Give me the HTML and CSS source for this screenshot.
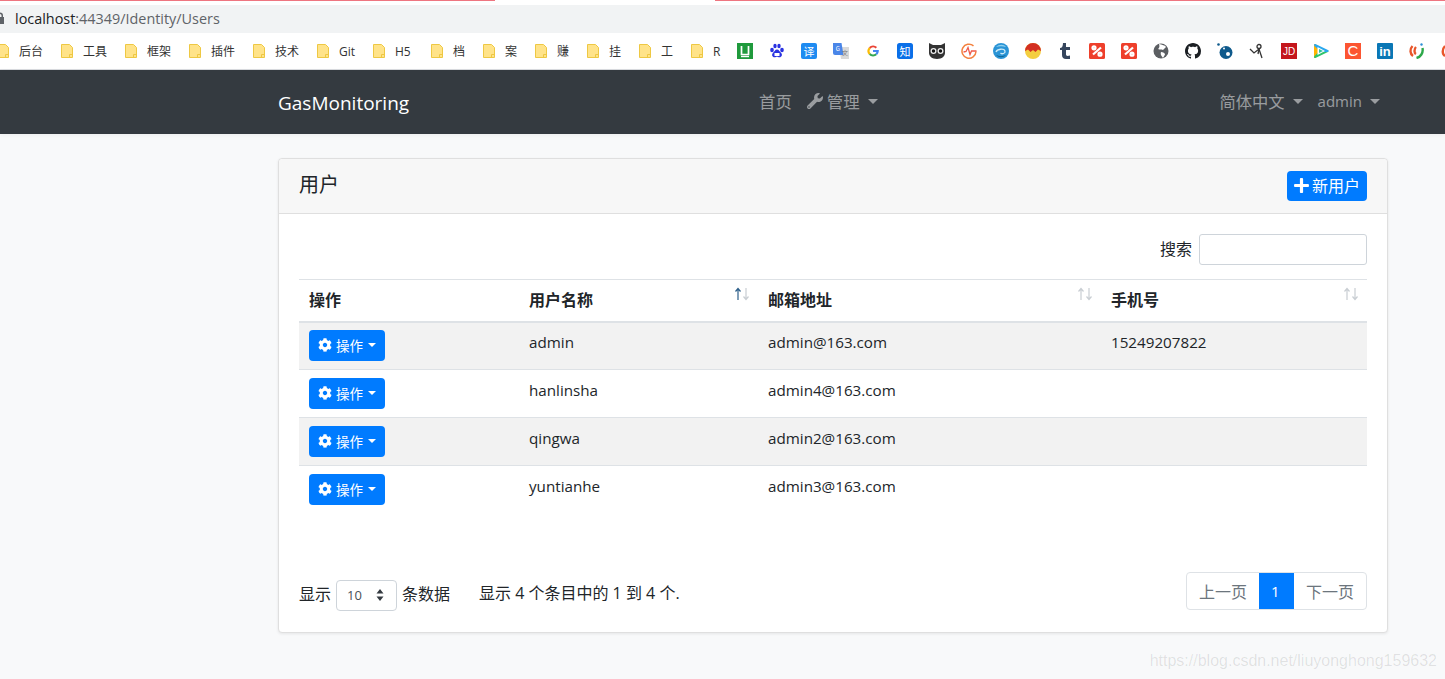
FILE: index.html
```html
<!DOCTYPE html>
<html lang="zh-CN">

<head>
  <meta charset="UTF-8" />
  <title>用户 - GasMonitoring</title>
  <link rel="stylesheet" href="styles.css">
</head>

<body>

  <div class="load-bar">
    <span class="load-red load-left"></span>
    <span class="load-gap"></span>
    <span class="load-red load-right"></span>
  </div>

  <div class="address-bar">
    <svg class="lock" viewBox="0 0 8 12"><path fill="#5f6368" d="M1 5V3.500a3 3 0 0 1 6 0V5h1v7H0V5zm1.500 0h3V3.500a1.500 1.500 0 0 0-3 0z"/></svg>
    <span class="host">localhost</span><span class="path">:44349/Identity/Users</span>
  </div>

  <div class="bookmarks">
    <div class="folders">
      <a class="folder f-64"><svg viewBox="0 0 12 14"><use href="#folder"/></svg>后台</a>
      <a class="folder f-64"><svg viewBox="0 0 12 14"><use href="#folder"/></svg>工具</a>
      <a class="folder f-64"><svg viewBox="0 0 12 14"><use href="#folder"/></svg>框架</a>
      <a class="folder f-64"><svg viewBox="0 0 12 14"><use href="#folder"/></svg>插件</a>
      <a class="folder f-64"><svg viewBox="0 0 12 14"><use href="#folder"/></svg>技术</a>
      <a class="folder f-56"><svg viewBox="0 0 12 14"><use href="#folder"/></svg>Git</a>
      <a class="folder f-58"><svg viewBox="0 0 12 14"><use href="#folder"/></svg>H5</a>
      <a class="folder f-52"><svg viewBox="0 0 12 14"><use href="#folder"/></svg>档</a>
      <a class="folder f-52"><svg viewBox="0 0 12 14"><use href="#folder"/></svg>案</a>
      <a class="folder f-52"><svg viewBox="0 0 12 14"><use href="#folder"/></svg>赚</a>
      <a class="folder f-52"><svg viewBox="0 0 12 14"><use href="#folder"/></svg>挂</a>
      <a class="folder f-52"><svg viewBox="0 0 12 14"><use href="#folder"/></svg>工</a>
      <a class="folder f-46"><svg viewBox="0 0 12 14"><use href="#folder"/></svg>R</a>
    </div>
    <div class="sites">
      <svg viewBox="0 0 16 16"><rect width="16" height="16" fill="#1f9a3c"/><path fill="none" stroke="#fff" stroke-width="1.700" d="M4.500 3v8.500h7V3"/><path stroke="#fff" stroke-width="1.400" d="M4 13.500h8"/></svg>
      <svg viewBox="0 0 16 16"><g fill="#2932e1"><ellipse cx="3" cy="7" rx="1.800" ry="2.200"/><ellipse cx="6" cy="3" rx="1.700" ry="2.200"/><ellipse cx="10" cy="3" rx="1.700" ry="2.200"/><ellipse cx="13" cy="7" rx="1.800" ry="2.200"/><path d="M8 6.500c2 0 2.500 2 4 3.200 1.800 1.600.8 4.800-1.800 4.600-1 0-1.400-.5-2.200-.5s-1.400.5-2.400.5c-2.500 0-3.300-3-1.500-4.600C5.500 8.500 6 6.500 8 6.500z"/></g><rect x="5.500" y="10" width="5" height="3" fill="#fff"/></svg>
      <svg viewBox="0 0 16 16"><rect width="16" height="16" rx="2" fill="#1e8bf1"/><text x="8" y="12.700" text-anchor="middle" class="ico-cjk" fill="#fff">译</text></svg>
      <svg viewBox="0 0 16 16"><path fill="#d9d9d9" d="M6 4h10v12H8z"/><path fill="#4a86e8" d="M0 0h8.500l2 12H2a2 2 0 0 1-2-2z"/><text x="4.800" y="7.500" text-anchor="middle" class="ico-small" fill="#fff">G</text><text x="12" y="12" text-anchor="middle" class="ico-small" fill="#777">文</text></svg>
      <svg viewBox="-3 -3 22 22"><path fill="none" stroke-width="3" stroke="#ea4335" d="M12.600 3.500A6.500 6.500 0 0 0 3.500 3.800"/><path fill="none" stroke-width="3" stroke="#fbbc05" d="M3.500 3.800a6.500 6.500 0 0 0 0 8.400"/><path fill="none" stroke-width="3" stroke="#34a853" d="M3.500 12.200a6.500 6.500 0 0 0 9 .3"/><path fill="none" stroke-width="3" stroke="#4285f4" d="M12.500 12.500A6.500 6.500 0 0 0 14.500 8H8"/></svg>
      <svg viewBox="0 0 16 16"><rect width="16" height="16" rx="2.500" fill="#0a6fe8"/><text x="8" y="12.700" text-anchor="middle" class="ico-cjk" fill="#fff">知</text></svg>
      <svg viewBox="0 0 16 16"><path fill="#333" d="M0 0l4 2h8l4-2v10c0 3-3 6-8 6s-8-3-8-6z"/><circle cx="4.500" cy="8" r="3" fill="#eee"/><circle cx="11.500" cy="8" r="3" fill="#eee"/><circle cx="4.500" cy="8" r="1.700" fill="#111"/><circle cx="11.500" cy="8" r="1.700" fill="#111"/></svg>
      <svg viewBox="0 0 16 16"><path fill="none" stroke="#f3813e" stroke-width="1.500" d="M12.500 2.800A7 7 0 1 0 15 8.500"/><path fill="none" stroke="#ef5b4b" stroke-width="1.300" d="M2.500 9l2.500-.5 2-4 2 7 1.500-3.500h5"/></svg>
      <svg viewBox="0 0 16 16"><circle cx="8" cy="8" r="8" fill="#2a94d6"/><path fill="#8fd0ee" d="M3 4c3-3 8-3 10 0-3-1-7-1-10 0z"/><path fill="none" stroke="#cdebf7" stroke-width="1.300" d="M3 9c1-3 8-4 9-1 .6 2.500-3 3.500-4.500 2"/><path fill="#10648f" d="M3 12c3 3 7 3 10 0-3 1.500-7 1.500-10 0z"/></svg>
      <svg viewBox="0 0 16 16"><circle cx="8" cy="8" r="8" fill="#f4ce3f"/><path fill="#d32f22" d="M0 8a8 8 0 0 1 16 0L13 6.500 10.500 9 8 7 5.500 9 3 6.500z"/></svg>
      <svg viewBox="0 0 16 16"><path fill="#36465d" d="M6 0h3v4h4v3H9v4.500c0 1.500 1.500 1.700 4 1V16H9c-2.500 0-4-1.500-4-4V7H3V5c2 0 3-2 3-5z"/></svg>
      <svg viewBox="0 0 16 16"><use href="#red-x"/></svg>
      <svg viewBox="0 0 16 16"><use href="#red-x"/></svg>
      <svg viewBox="0 0 16 16"><circle cx="8" cy="8" r="7.500" fill="#5b5e62"/><path fill="#fff" d="M6 1c3 1 6 1 7 3l-3 3c-2-1-3 0-5-1 1-1 2-2 1-5zM8 9c2 0 4 1 4 2.500L10 15c-1-2-3-3-2-6z"/></svg>
      <svg viewBox="0 0 16 16"><path fill="#1b1f23" d="M8 0C3.580 0 0 3.580 0 8c0 3.540 2.290 6.530 5.470 7.590.4.070.55-.17.55-.38 0-.19-.01-.82-.01-1.490-2.010.37-2.530-.49-2.690-.94-.09-.23-.48-.94-.82-1.130-.28-.15-.68-.52-.01-.53.63-.01 1.080.58 1.230.82.720 1.210 1.870.87 2.330.66.070-.52.280-.87.510-1.070-1.780-.2-3.640-.89-3.640-3.950 0-.87.310-1.590.820-2.150-.08-.2-.36-1.020.080-2.120 0 0 .670-.21 2.200.82.640-.18 1.320-.27 2-.27s1.360.090 2 .270c1.530-1.040 2.200-.82 2.200-.82.440 1.100.160 1.920.080 2.120.510.560.820 1.270.820 2.150 0 3.070-1.870 3.750-3.650 3.950.290.250.540.730.540 1.480 0 1.070-.01 1.930-.01 2.200 0 .210.150.460.550.380A8.013 8.013 0 0 0 16 8c0-4.420-3.580-8-8-8z"/></svg>
      <svg viewBox="0 0 16 16"><circle cx="1.500" cy="1.500" r="1.300" fill="#0f5a8c"/><circle cx="9" cy="9.500" r="6.500" fill="#0f5a8c"/><circle cx="11" cy="11" r="2" fill="#fff"/><circle cx="7" cy="5.500" r="1" fill="#fff"/></svg>
      <svg viewBox="0 0 16 16"><g fill="none" stroke="#333" stroke-width="1.300"><circle cx="10" cy="3.500" r="2"/><path d="M1 6l4 4 5-4 3 9"/><path d="M10 6l-1 5"/></g></svg>
      <svg viewBox="0 0 16 16"><rect width="16" height="16" fill="#c4161c"/><text x="8" y="12.300" text-anchor="middle" class="ico-latin" fill="#fff">JD</text></svg>
      <svg viewBox="0 0 16 16"><path fill="#ffb400" stroke="#ffb400" stroke-width="2" stroke-linejoin="round" d="M2 2v12l6-6z"/><path fill="#2fc46b" stroke="#2fc46b" stroke-width="2" stroke-linejoin="round" d="M2 14l12.500-6H8z"/><path fill="#2aa8ee" stroke="#2aa8ee" stroke-width="2" stroke-linejoin="round" d="M2 2l12.500 6H8z"/><path fill="#fff" d="M4.500 4L12 8l-7.500 4z"/><path fill="#2cc3a0" d="M6 6l4 2-4 2z"/></svg>
      <svg viewBox="0 0 16 16"><rect width="16" height="16" fill="#fc5531"/><text x="8" y="13" text-anchor="middle" class="ico-c" fill="#fff">C</text></svg>
      <svg viewBox="0 0 16 16"><rect width="16" height="16" rx="1" fill="#0a77b5"/><text x="8" y="13" text-anchor="middle" class="ico-in" fill="#fff">in</text></svg>
      <svg viewBox="0 0 16 16"><path fill="none" stroke="#e8562a" stroke-width="2.400" d="M3.500 3C.5 6 1 11 4 13M7 4c-2 2-2 6 0 7"/><path fill="none" stroke="#2da84a" stroke-width="2.400" d="M13.500 5c1 5-2 9-6 10"/><circle cx="12.500" cy="1.500" r="1.200" fill="#2c8fd6"/></svg>
      <svg class="site-cut" viewBox="0 0 8 16"><path fill="none" stroke="#e8562a" stroke-width="2.400" d="M4 3C1 6 1 11 4 13M7 4c-2 2-2 6 0 7"/></svg>
    </div>
  </div>

  <nav class="navbar">
    <a class="brand">GasMonitoring</a>
    <ul class="nav-center">
      <li>首页</li>
      <li class="nav-tool">
        <svg class="ico-wrench" viewBox="0 0 512 512"><path fill="currentColor" d="M507.730 109.100c-2.240-9.030-13.540-12.090-20.120-5.510l-74.360 74.360-67.880-11.310-11.310-67.880 74.360-74.360c6.620-6.620 3.430-17.900-5.660-20.160-47.380-11.740-99.550.91-136.580 37.930-39.640 39.640-50.550 97.100-34.050 147.200L18.740 402.760c-24.990 24.990-24.990 65.510 0 90.500 24.990 24.990 65.510 24.990 90.500 0l213.210-213.210c50.120 16.710 107.470 5.680 147.370-34.220 37.070-37.070 49.700-89.320 37.910-136.730zM64 472c-13.250 0-24-10.750-24-24 0-13.260 10.750-24 24-24s24 10.740 24 24c0 13.250-10.750 24-24 24z"/></svg>
        管理<i class="caret"></i>
      </li>
    </ul>
    <ul class="nav-right">
      <li>简体中文<i class="caret"></i></li>
      <li class="nav-user">admin<i class="caret"></i></li>
    </ul>
  </nav>

  <main class="content">
    <div class="card">
      <div class="card-header">
        <h3>用户</h3>
        <a class="btn btn-new">
          <svg class="ico-plus" viewBox="0 0 448 512"><path fill="currentColor" d="M416 208H272V64c0-17.670-14.330-32-32-32h-32c-17.670 0-32 14.330-32 32v144H32c-17.670 0-32 14.330-32 32v32c0 17.670 14.330 32 32 32h144v144c0 17.670 14.330 32 32 32h32c17.670 0 32-14.330 32-32V304h144c17.670 0 32-14.330 32-32v-32c0-17.670-14.330-32-32-32z"/></svg>
          新用户
        </a>
      </div>

      <div class="card-body">
        <div class="search-row">
          <label for="search">搜索</label>
          <input type="text" id="search">
        </div>

        <table class="users">
          <thead>
            <tr>
              <th class="col-action">操作</th>
              <th class="col-name sortable">用户名称<svg class="sort sort-up" viewBox="0 0 16 14"><use href="#sort"/></svg></th>
              <th class="col-mail sortable">邮箱地址<svg class="sort" viewBox="0 0 16 14"><use href="#sort"/></svg></th>
              <th class="col-phone sortable">手机号<svg class="sort" viewBox="0 0 16 14"><use href="#sort"/></svg></th>
            </tr>
          </thead>
          <tbody>
            <tr>
              <td><a class="btn btn-action"><svg class="ico-cog" viewBox="0 0 512 512"><use href="#cog"/></svg>操作<i class="caret caret-sm"></i></a></td>
              <td>admin</td>
              <td>admin@163.com</td>
              <td>15249207822</td>
            </tr>
            <tr>
              <td><a class="btn btn-action"><svg class="ico-cog" viewBox="0 0 512 512"><use href="#cog"/></svg>操作<i class="caret caret-sm"></i></a></td>
              <td>hanlinsha</td>
              <td>admin4@163.com</td>
              <td></td>
            </tr>
            <tr>
              <td><a class="btn btn-action"><svg class="ico-cog" viewBox="0 0 512 512"><use href="#cog"/></svg>操作<i class="caret caret-sm"></i></a></td>
              <td>qingwa</td>
              <td>admin2@163.com</td>
              <td></td>
            </tr>
            <tr>
              <td><a class="btn btn-action"><svg class="ico-cog" viewBox="0 0 512 512"><use href="#cog"/></svg>操作<i class="caret caret-sm"></i></a></td>
              <td>yuntianhe</td>
              <td>admin3@163.com</td>
              <td></td>
            </tr>
          </tbody>
        </table>

        <div class="table-footer">
          <div class="page-size">
            <span>显示</span>
            <span class="select">10
              <svg viewBox="0 0 8 12"><path fill="#343a40" d="M4 0l3.500 4.500h-7zM4 12L.5 7.500h7z"/></svg>
            </span>
            <span>条数据</span>
          </div>
          <div class="page-info">显示 4 个条目中的 1 到 4 个.</div>
          <ul class="pagination">
            <li>上一页</li>
            <li class="active">1</li>
            <li>下一页</li>
          </ul>
        </div>
      </div>
    </div>
  </main>

  <div class="watermark">https://blog.csdn.net/liuyonghong159632</div>

  <svg class="defs" aria-hidden="true">
    <symbol id="folder" viewBox="0 0 12 14">
      <path fill="#ffe389" stroke="#eec843" d="M.5 .5h8l3 3v10H.5z"/>
      <path fill="none" stroke="#eec843" d="M8.500 13.500v-3h3"/>
    </symbol>
    <symbol id="red-x" viewBox="0 0 16 16">
      <rect width="16" height="16" rx="1.500" fill="#ee3f2b"/>
      <g fill="none" stroke="#fff" stroke-width="2.200">
        <path d="M12 4.500l-8 7"/>
        <circle cx="5" cy="4.800" r="1.500"/>
        <circle cx="11" cy="11.200" r="1.500"/>
      </g>
    </symbol>
    <symbol id="sort" viewBox="0 0 16 14">
      <path class="sort-a" fill="none" stroke-width="1.200" d="M4 13V1.500M1.500 4.500L4 1.500l2.500 3"/>
      <path class="sort-b" fill="none" stroke="#c9ced3" stroke-width="1.200" d="M12 1v11.500M9.500 9.500l2.500 3 2.500-3"/>
    </symbol>
    <symbol id="cog" viewBox="0 0 512 512">
      <path fill="currentColor" d="M487.400 315.700l-42.600-24.600c4.300-23.200 4.300-47 0-70.200l42.600-24.600c4.900-2.800 7.100-8.600 5.500-14-11.100-35.600-30-67.800-54.700-94.600-3.800-4.100-10-5.100-14.800-2.300L380.800 110c-17.900-15.400-38.500-27.300-60.800-35.100V25.800c0-5.600-3.900-10.500-9.400-11.700-36.700-8.200-74.300-7.800-109.200 0-5.500 1.200-9.400 6.100-9.400 11.700V75c-22.200 7.900-42.800 19.800-60.800 35.100L88.700 85.500c-4.900-2.800-11-1.900-14.800 2.300-24.700 26.700-43.600 58.900-54.700 94.600-1.700 5.400.6 11.200 5.500 14L67.300 221c-4.300 23.200-4.300 47 0 70.200l-42.600 24.600c-4.900 2.800-7.100 8.600-5.500 14 11.100 35.600 30 67.800 54.700 94.600 3.800 4.100 10 5.100 14.800 2.300l42.600-24.600c17.900 15.400 38.500 27.300 60.800 35.100v49.200c0 5.600 3.900 10.500 9.400 11.700 36.700 8.200 74.300 7.800 109.200 0 5.500-1.200 9.400-6.100 9.400-11.700v-49.200c22.200-7.900 42.800-19.800 60.800-35.100l42.600 24.600c4.900 2.800 11 1.900 14.800-2.300 24.700-26.700 43.600-58.900 54.700-94.600 1.500-5.500-.7-11.300-5.600-14.100zM256 336c-44.100 0-80-35.900-80-80s35.900-80 80-80 80 35.900 80 80-35.900 80-80 80z"/>
    </symbol>
  </svg>

</body>

</html>
```

FILE: styles.css
```css
* {
  box-sizing: border-box;
}

body {
  margin: 0;
  height: 679px;
  overflow: hidden;
  background-color: #f8f9fa;
  color: #212529;
  font-family: "Open Sans", "Noto Sans CJK SC", sans-serif;
  font-size: 15px;
}

ul {
  list-style: none;
  margin: 0;
  padding: 0;
}

/* browser chrome */
.load-bar {
  display: flex;
  height: 5px;
  background-color: #fff;
}

.load-red {
  height: 1px;
  background-color: #ee7580;
}

.load-left {
  width: 495px;
}

.load-gap {
  width: 220px;
}

.load-right {
  flex: 1;
}

.address-bar {
  display: flex;
  align-items: center;
  height: 28px;
  padding-bottom: 2px;
  background-color: #f1f3f4;
  font-size: 14.400px;
}

.lock {
  width: 8px;
  height: 12px;
  margin-left: -4px;
  margin-right: 11px;
}

.host {
  color: #202124;
}

.path {
  color: #5f6368;
}

.bookmarks {
  display: flex;
  align-items: center;
  height: 37px;
  background-color: #fff;
  border-bottom: 1px solid #dadce0;
  overflow: hidden;
}

.folders {
  display: flex;
  margin-left: -3px;
}

.folder {
  display: flex;
  align-items: center;
  gap: 10px;
  color: #333;
  font-size: 12px;
}

.folder svg {
  width: 12px;
  height: 14px;
  flex: none;
}

.f-64 {
  width: 64px;
}

.f-56 {
  width: 56px;
}

.f-58 {
  width: 58px;
}

.f-52 {
  width: 52px;
}

.f-46 {
  width: 46px;
}

.sites {
  display: flex;
  gap: 16px;
  flex: none;
}

.sites svg {
  width: 16px;
  height: 16px;
  flex: none;
}

.sites .site-cut {
  width: 8px;
}

.ico-cjk {
  font-family: "Noto Sans CJK SC", sans-serif;
  font-size: 11px;
}

.ico-small {
  font-family: "Noto Sans CJK SC", sans-serif;
  font-size: 6px;
}

.ico-latin {
  font-family: "Liberation Sans", sans-serif;
  font-size: 10px;
}

.ico-c {
  font-family: "Liberation Sans", sans-serif;
  font-size: 15px;
}

.ico-in {
  font-family: "Liberation Sans", sans-serif;
  font-size: 13px;
  font-weight: bold;
}

.defs {
  display: none;
}

/* navbar */
.navbar {
  display: flex;
  align-items: center;
  height: 64px;
  padding: 0 65px 0 278px;
  background-color: #343a40;
  color: rgba(255, 255, 255, 0.5);
  box-shadow: 0 1px 4px rgba(0, 0, 0, 0.05);
}

.brand {
  width: 481px;
  margin-top: 2px;
  color: #fff;
  font-size: 19px;
}

.nav-center {
  display: flex;
  gap: 15px;
  flex: 1;
  margin-bottom: 2px;
  font-size: 16.400px;
}

.nav-tool {
  display: flex;
  align-items: center;
}

.nav-right {
  display: flex;
  gap: 15px;
  margin-bottom: 2px;
  font-size: 16.300px;
}

.nav-right li {
  display: flex;
  align-items: center;
}

.nav-user {
  font-size: 15px;
}

.ico-wrench {
  width: 16px;
  height: 16px;
  margin-right: 4px;
}

.caret {
  display: inline-block;
  width: 0;
  height: 0;
  margin-left: 8px;
  border-top: 5px solid;
  border-left: 5px solid transparent;
  border-right: 5px solid transparent;
}

.caret-sm {
  margin-left: 5px;
  border-top-width: 4px;
  border-left-width: 4px;
  border-right-width: 4px;
}

/* card */
.content {
  padding: 24px 57px 0 278px;
}

.card {
  height: 475px;
  background-color: #fff;
  border: 1px solid #dfdfdf;
  border-radius: 4px;
  box-shadow: 0 1px 3px rgba(0, 0, 0, 0.08);
}

.card-header {
  display: flex;
  justify-content: space-between;
  align-items: center;
  height: 55px;
  padding: 0 20px;
  background-color: #f7f7f7;
  border-bottom: 1px solid #dfdfdf;
  border-radius: 4px 4px 0 0;
}

.card-header h3 {
  margin: 0 0 6px;
  font-size: 20px;
  font-weight: normal;
}

.btn {
  display: inline-flex;
  align-items: center;
  background-color: #007bff;
  color: #fff;
  border-radius: 4px;
}

.btn-new {
  height: 30px;
  padding: 0 7px 2px;
  font-size: 16px;
}

.ico-plus {
  width: 15px;
  height: 17px;
  margin-right: 3px;
}

.card-body {
  padding: 20px 20px 0;
}

.search-row {
  display: flex;
  justify-content: flex-end;
  align-items: center;
  gap: 7px;
  height: 31px;
  margin-bottom: 14px;
  font-size: 16px;
}

.search-row label {
  margin-bottom: 3px;
}

.search-row input {
  width: 168px;
  height: 31px;
  border: 1px solid #ced4da;
  border-radius: 3px;
  outline: none;
}

/* table */
.users {
  width: 100%;
  border-collapse: collapse;
  table-layout: fixed;
  font-size: 15.200px;
}

.users th {
  position: relative;
  height: 42px;
  padding: 0 10px 2px;
  border-top: 1px solid #dee2e6;
  border-bottom: 2px solid #dee2e6;
  text-align: left;
  font-size: 16px;
  font-weight: bold;
}

.users td {
  height: 48px;
  padding: 0 10px 7px;
  border-bottom: 1px solid #dee2e6;
}

.users tbody tr:nth-child(odd) {
  background-color: #f2f2f2;
}

.users tbody tr:last-child td {
  border-bottom: none;
}

.col-action {
  width: 220px;
}

.col-name {
  width: 239px;
}

.col-mail {
  width: 343px;
}

.sort {
  position: absolute;
  top: 7px;
  right: 8px;
  width: 16px;
  height: 14px;
  stroke: #c9ced3;
}

.sort-up {
  stroke: #2d5f8a;
}

.btn-action {
  height: 31px;
  margin-top: 7px;
  padding: 0 9px 2px;
  font-size: 13.500px;
}

.ico-cog {
  width: 14px;
  height: 14px;
  margin-right: 4px;
  color: #fff;
}

/* footer of the table */
.table-footer {
  display: flex;
  align-items: center;
  margin-top: 57px;
}

.page-size {
  display: flex;
  align-items: center;
  gap: 5px;
  width: 180px;
  margin-top: 9px;
  font-size: 16px;
}

.page-size span {
  margin-bottom: 4px;
}

.page-size .select {
  margin-bottom: 0;
}

.select {
  display: flex;
  justify-content: space-between;
  align-items: center;
  width: 61px;
  height: 31px;
  padding: 0 12px 0 10px;
  border: 1px solid #ced4da;
  border-radius: 4px;
  color: #495057;
  font-size: 13px;
}

.select svg {
  width: 8px;
  height: 12px;
}

.page-info {
  flex: 1;
  margin-top: 3px;
  font-size: 16px;
}

.pagination {
  display: flex;
  height: 38px;
  border: 1px solid #dee2e6;
  border-radius: 4px;
  color: #6c757d;
  font-size: 16px;
}

.pagination li {
  display: flex;
  align-items: center;
  padding: 0 12px;
}

.pagination .active {
  width: 35px;
  padding: 0 12px;
  background-color: #007bff;
  color: #fff;
  font-size: 15px;
}

.watermark {
  position: absolute;
  right: 8px;
  top: 652px;
  color: rgba(0, 0, 0, 0.1);
  font-family: "Liberation Sans", sans-serif;
  font-size: 16px;
}
```
